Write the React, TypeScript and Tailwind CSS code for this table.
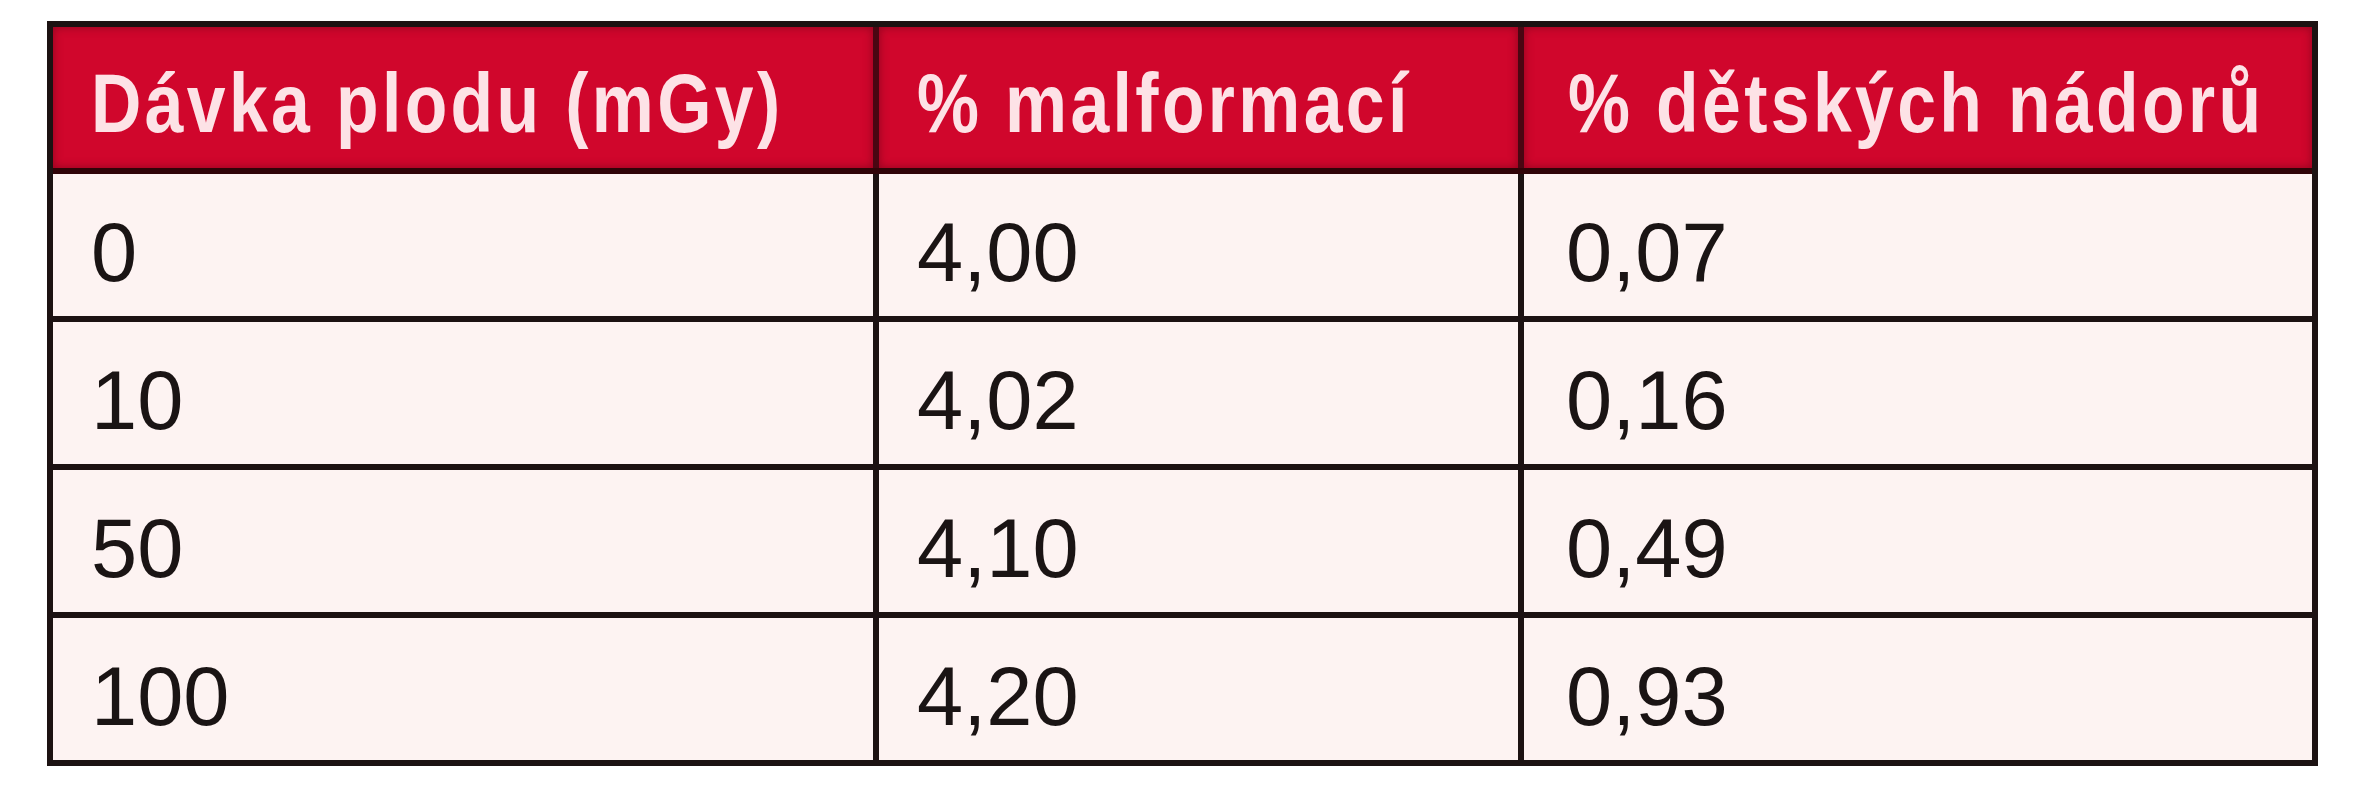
const header = ["Dávka plodu (mGy)", "% malformací", "% dětských nádorů"];

const rows = [
  ["0", "4,00", "0,07"],
  ["10", "4,02", "0,16"],
  ["50", "4,10", "0,49"],
  ["100", "4,20", "0,93"],
];

export default function App() {
  return (
    <main className="min-h-screen w-[2366px] h-[800px] bg-white pl-[47px] pt-[21px]">
      <div className="w-[2271px] border-[6px] border-[#1c1212]">
        {/* HEADER */}
        <div className="grid grid-cols-[826px_645px_1fr] border-b-[6px] border-[#300408] bg-[#d0062c]">
          {header.map((h, i) => (
            <div
              key={h}
              className={
                "h-[141px] flex items-center pt-[12px] overflow-hidden shadow-[inset_0_0_10px_rgba(90,0,20,0.55)] " +
                (i < 2 ? "border-r-[6px] border-[#4a0612] " : "") +
                (i === 2 ? "pl-[44px]" : "pl-[38px]")
              }
            >
              <span className="inline-block whitespace-nowrap origin-left scale-x-[0.84] font-['Liberation_Sans',Arial,sans-serif] font-bold text-[83px] leading-none tracking-[4px] text-[#fde2e6]">
                {h}
              </span>
            </div>
          ))}
        </div>

        {/* BODY */}
        {rows.map((r, ri) => (
          <div
            key={r[0]}
            className={
              "grid grid-cols-[826px_645px_1fr] bg-[#fdf3f2] " +
              (ri < rows.length - 1 ? "border-b-[6px] border-[#1c1212]" : "")
            }
          >
            {r.map((c, ci) => (
              <div
                key={ci}
                className={
                  "h-[142px] flex items-center pt-[14px] font-['Liberation_Sans',Arial,sans-serif] text-[83px] leading-none text-[#1a1414] " +
                  (ci < 2 ? "border-r-[6px] border-[#1c1212] " : "") +
                  (ci === 2 ? "pl-[42px]" : "pl-[38px]")
                }
              >
                {c}
              </div>
            ))}
          </div>
        ))}
      </div>
    </main>
  );
}
